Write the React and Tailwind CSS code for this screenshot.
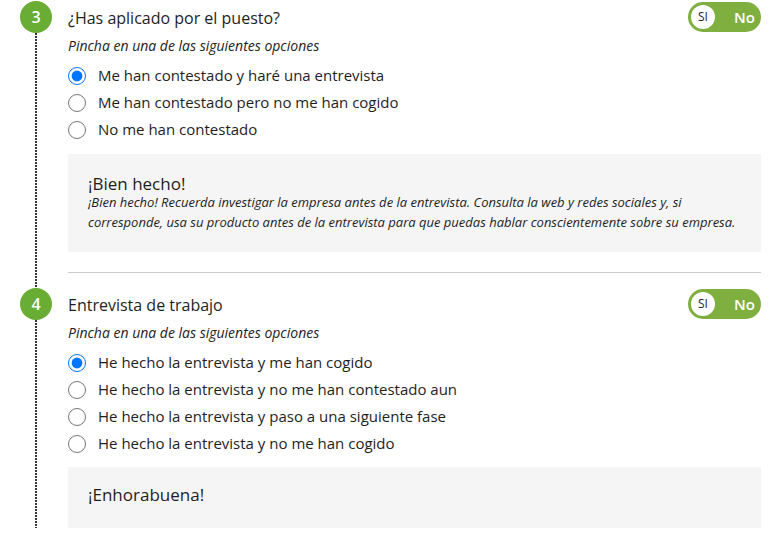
import React from "react";

const font = { fontFamily: '"Open Sans", "Noto Sans", sans-serif' };

function Toggle() {
  return (
    <div className="flex items-center w-[73px] h-[30px] rounded-full bg-[#7fb03f] pl-[3px] pr-[6px] justify-between">
      <div className="w-[24px] h-[24px] rounded-full bg-white flex items-center justify-center text-[12px] text-[#1c1c3a]">SI</div>
      <span className="text-[15px] font-semibold text-white">No</span>
    </div>
  );
}

function Dots() {
  return (
    <div className="w-[2px] flex-1 bg-[linear-gradient(to_bottom,#34343f_66%,transparent_66%)] bg-[length:2px_3px]" />
  );
}

function Section({ num, title, options, box, boxClass, divider }) {
  return (
    <div className="flex">
      <div className="w-[68px] pl-5 flex flex-col shrink-0">
        <div className="w-8 flex flex-col items-center flex-1">
          <div className="w-8 h-8 rounded-full bg-[#69ad35] text-white text-[16px] font-semibold flex items-center justify-center shrink-0">
            {num}
          </div>
          <Dots />
        </div>
      </div>
      <div className="flex-1 pr-5">
        <div className="flex items-center justify-between h-8">
          <div className="text-[16px] text-[#1e1e1e] pt-[2px]">{title}</div>
          <Toggle />
        </div>
        <div className="mt-[3px] text-[14px] italic text-[#222] leading-5">Pincha en una de las siguientes opciones</div>
        <div className="mt-[6px] flex flex-col">
          {options.map((o, i) => (
            <label key={i} className="flex items-center h-[27px] text-[15px] text-[#1e1e1e]">
              <input type="radio" name={"q" + num} defaultChecked={i === 0} className="w-[18px] h-[18px] m-0 mr-3" />
              <span>{o}</span>
            </label>
          ))}
        </div>
        <div className={"bg-[#f5f5f5] px-5 " + boxClass}>{box}</div>
        {divider && <div className="mt-5 mb-[15px] h-px bg-[#cccccc]" />}
      </div>
    </div>
  );
}

export default function App() {
  return (
    <div style={font} className="bg-white w-[781px] h-[540px] overflow-hidden pt-px">
      <Section
        num="3"
        title="¿Has aplicado por el puesto?"
        options={[
          "Me han contestado y haré una entrevista",
          "Me han contestado pero no me han cogido",
          "No me han contestado",
        ]}
        divider
        boxClass="mt-[11px] pt-[22px] pb-5"
        box={
          <>
            <div className="text-[17px] leading-4 text-[#1e1e1e]">¡Bien hecho!</div>
            <p className="text-[13px] leading-5 italic text-[#1e1e1e]">
              ¡Bien hecho! Recuerda investigar la empresa antes de la entrevista. Consulta la web y redes sociales y, si corresponde, usa su producto antes de la entrevista para que puedas hablar conscientemente sobre su empresa.
            </p>
          </>
        }
      />
      <Section
        num="4"
        title="Entrevista de trabajo"
        options={[
          "He hecho la entrevista y me han cogido",
          "He hecho la entrevista y no me han contestado aun",
          "He hecho la entrevista y paso a una siguiente fase",
          "He hecho la entrevista y no me han cogido",
        ]}
        boxClass="mt-[10px] pt-5 pb-[25px]"
        box={<div className="text-[17px] leading-4 text-[#1e1e1e]">¡Enhorabuena!</div>}
      />
    </div>
  );
}
